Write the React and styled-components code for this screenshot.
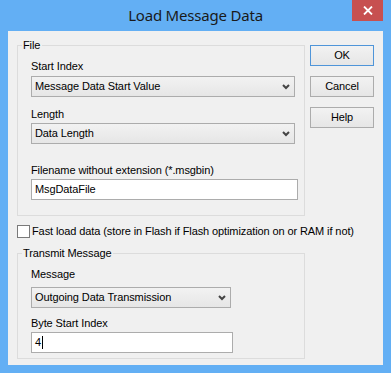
import React from 'react';
import styled, { createGlobalStyle } from 'styled-components';

const GlobalStyle = createGlobalStyle`
  html, body {
    margin: 0;
    padding: 0;
    background: #ffffff;
  }
  * {
    box-sizing: border-box;
  }
`;

const Window = styled.div`
  width: 391px;
  height: 373px;
  background: #63aff4;
  display: flex;
  flex-direction: column;
  font-family: 'Liberation Sans', Arial, sans-serif;
  font-size: 11px;
  letter-spacing: -0.1px;
  color: #000;
`;

const TitleBar = styled.div`
  height: 31px;
  padding: 0 8px;
  display: grid;
  grid-template-columns: 1fr auto 1fr;
  align-items: start;
`;

const Title = styled.div`
  grid-column: 2;
  padding-top: 5px;
  line-height: 20px;
  font-family: 'Noto Sans', 'Open Sans', sans-serif;
  font-size: 15px;
  letter-spacing: -0.2px;
  color: #1a1a1a;
`;

const CloseButton = styled.div`
  grid-column: 3;
  justify-self: end;
  width: 31px;
  height: 21px;
  background: #c75050;
  display: flex;
  align-items: center;
  justify-content: center;
`;

const Client = styled.div`
  flex: 1;
  margin: 0 8px 8px;
  background: #f0f0f0;
  padding: 14px 0 0 9px;
  display: flex;
  flex-direction: column;
`;

const TopRow = styled.div`
  display: flex;
  align-items: flex-start;
`;

const GroupBox = styled.div`
  width: 288px;
  border: 1px solid #dcdcdc;
  padding: 0 13px ${(p) => p.$bottom}px;
  display: flex;
  flex-direction: column;
  margin-top: ${(p) => p.$top || 0}px;
`;

const Legend = styled.div`
  align-self: flex-start;
  margin: -7px 0 0 -9px;
  padding: 0 2px 0 1px;
  line-height: 13px;
  background: #f0f0f0;
`;

const Label = styled.div`
  line-height: 13px;
  margin-top: ${(p) => p.$gap}px;
  margin-bottom: ${(p) => p.$after || 2}px;
`;

const Combo = styled.div`
  width: ${(p) => p.$width}px;
  height: 21px;
  border: 1px solid #acacac;
  background: linear-gradient(#f2f2f2, #e6e6e6);
  display: flex;
  align-items: center;
  justify-content: space-between;
  padding: 0 4px 0 3px;
  line-height: 13px;
`;

const TextBox = styled.div`
  width: ${(p) => p.$width}px;
  height: 21px;
  border: 1px solid #acacac;
  background: #ffffff;
  display: flex;
  align-items: center;
  padding: 0 3px;
  line-height: 13px;
`;

const Caret = styled.span`
  display: inline-block;
  width: 1px;
  height: 13px;
  margin-left: 1px;
  background: #000;
`;

const ButtonColumn = styled.div`
  margin-left: 5px;
  display: flex;
  flex-direction: column;
  gap: 10px;
`;

const Button = styled.div`
  width: 64px;
  height: 21px;
  border: 1px solid ${(p) => (p.$default ? '#4f95d9' : '#acacac')};
  background: linear-gradient(#f2f2f2, #e6e6e6);
  display: flex;
  align-items: center;
  justify-content: center;
  line-height: 13px;
`;

const CheckRow = styled.label`
  display: flex;
  align-items: center;
  gap: 2px;
  margin-top: 9px;
  line-height: 13px;
`;

const CheckBox = styled.span`
  width: 13px;
  height: 13px;
  border: 1px solid #7a7a7a;
  background: #ffffff;
  flex: none;
`;

const Chevron = () => (
  <svg width="8" height="6" viewBox="0 0 8 6">
    <path d="M1 1 L4 4 L7 1" fill="none" stroke="#444" strokeWidth="2" />
  </svg>
);

const CloseGlyph = () => (
  <svg width="10" height="9" viewBox="0 0 10 9">
    <path d="M1 0.5 L9 8.5 M9 0.5 L1 8.5" fill="none" stroke="#fff" strokeWidth="1.8" />
  </svg>
);

const App = () => (
  <>
    <GlobalStyle />
    <Window>
      <TitleBar>
        <Title>Load Message Data</Title>
        <CloseButton>
          <CloseGlyph />
        </CloseButton>
      </TitleBar>
      <Client>
        <TopRow>
          <GroupBox $bottom={15}>
            <Legend>File</Legend>
            <Label $gap={8} $after={3}>Start Index</Label>
            <Combo $width={264}>
              <span>Message Data Start Value</span>
              <Chevron />
            </Combo>
            <Label $gap={11}>Length</Label>
            <Combo $width={264}>
              <span>Data Length</span>
              <Chevron />
            </Combo>
            <Label $gap={20}>Filename without extension (*.msgbin)</Label>
            <TextBox $width={267}>MsgDataFile</TextBox>
          </GroupBox>
          <ButtonColumn>
            <Button $default>OK</Button>
            <Button>Cancel</Button>
            <Button>Help</Button>
          </ButtonColumn>
        </TopRow>
        <CheckRow>
          <CheckBox />
          <span>Fast load data (store in Flash if Flash optimization on or RAM if not)</span>
        </CheckRow>
        <GroupBox $top={15} $bottom={5}>
          <Legend>Transmit Message</Legend>
          <Label $gap={8} $after={6}>Message</Label>
          <Combo $width={200}>
            <span>Outgoing Data Transmission</span>
            <Chevron />
          </Combo>
          <Label $gap={9}>Byte Start Index</Label>
          <TextBox $width={202}>
            4<Caret />
          </TextBox>
        </GroupBox>
      </Client>
    </Window>
  </>
);

export default App;
